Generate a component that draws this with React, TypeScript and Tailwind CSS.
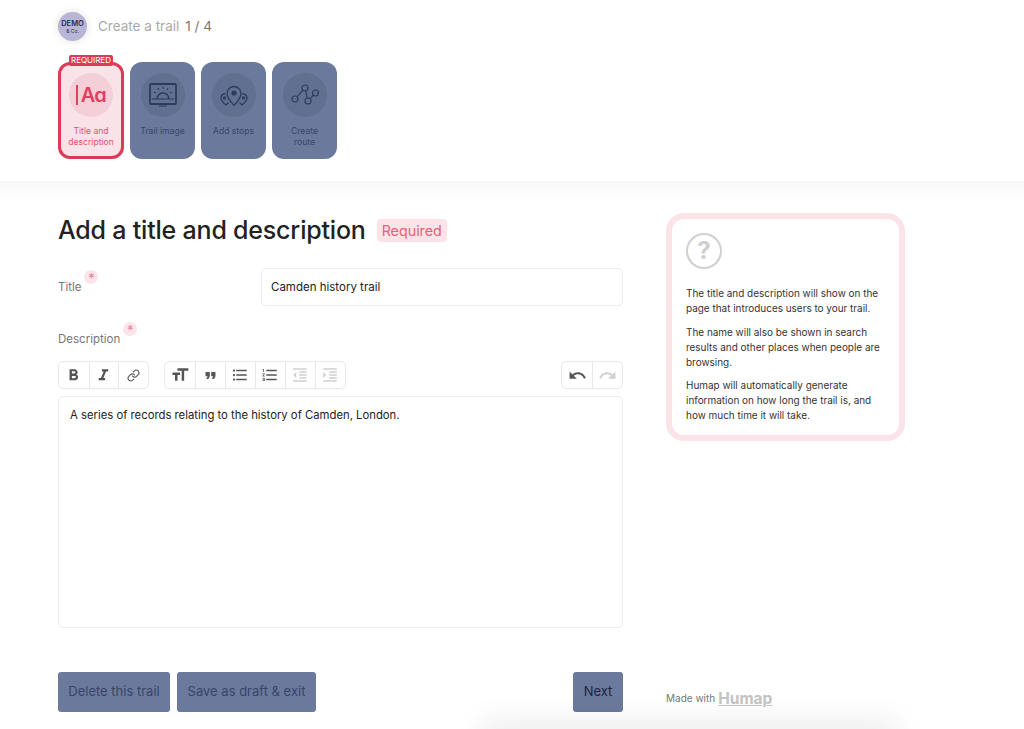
import { Link } from 'lucide-react';
import {
  MdFormatBold,
  MdFormatItalic,
  MdFormatQuote,
  MdFormatListBulleted,
  MdFormatListNumbered,
  MdFormatIndentDecrease,
  MdFormatIndentIncrease,
  MdFormatSize,
  MdUndo,
  MdRedo,
} from 'react-icons/md';
import type { ReactNode } from 'react';

const font = { fontFamily: 'Inter, "Noto Sans", sans-serif' };

function ImageIcon() {
  return (
    <svg width="28" height="24" viewBox="0 0 28 24" fill="none" stroke="#2f3b5c" strokeWidth="1.3">
      <rect x="1" y="1" width="26" height="20" rx="1" strokeWidth="1.8" />
      <path d="M8 16a6 6 0 0 1 12 0" strokeWidth="1.6" />
      <path d="M3 16h22M10 23h8M14 4v2M9 5l1 2M19 5l-1 2M5 9l2 1M23 9l-2 1" strokeWidth="1.1" />
    </svg>
  );
}

function StopsIcon() {
  return (
    <svg width="28" height="22" viewBox="0 0 28 22" fill="none" stroke="#2f3b5c" strokeWidth="1.3">
      <path d="M14 21.500c-3.500-4-7-7.500-7-12a7 7 0 0 1 14 0c0 4.500-3.500 8-7 12z" />
      <circle cx="14" cy="9" r="2.600" fill="#2f3b5c" stroke="none" />
      <path d="M5.500 9.500C3 10 1 11.500 1 14c0 2.500 2.500 5 5 7l2.500-2.500" />
      <path d="M22.500 9.500c2.500.5 4.500 2 4.500 4.500 0 2.500-2.500 5-5 7l-2.500-2.500" />
      <circle cx="4.500" cy="14" r="1" />
      <circle cx="23.500" cy="14" r="1" />
    </svg>
  );
}

function RouteIcon() {
  return (
    <svg width="28" height="22" viewBox="0 0 28 22" fill="none" stroke="#2f3b5c" strokeWidth="1.2">
      <circle cx="14" cy="4" r="3" />
      <circle cx="24.500" cy="9" r="3" />
      <circle cx="4" cy="15" r="3" />
      <circle cx="17" cy="17" r="3" />
      <path d="M12 6.200 6 12.800M14.700 7l1.600 7M19 14.800l3.500-3.600" />
    </svg>
  );
}

function Step({ label, icon, active }: { label: string; icon: ReactNode; active?: boolean }) {
  return (
    <div
      className={
        active
          ? 'relative w-[66px] h-[97px] rounded-[12px] border-[3px] border-[#dc3a57] bg-[#f9e3e8] flex flex-col items-center pt-[8px]'
          : 'w-[65px] h-[97px] rounded-[12px] bg-[#6b7a9c] flex flex-col items-center pt-[11px]'
      }
    >
      {active && (
        <span className="absolute -top-[10px] left-[8px] h-[11px] w-[44px] rounded-[2px] bg-[#dc3a57] text-white text-[8px] leading-[11px] text-center">
          REQUIRED
        </span>
      )}
      <div className={'w-[44px] h-[44px] rounded-full flex items-center justify-center ' + (active ? 'bg-[#f4cfd7]' : 'bg-[#616f91]')}>
        {icon}
      </div>
      <div className={'mt-[9px] px-2 text-center text-[8.6px] leading-[11px] ' + (active ? 'text-[#e4506c] px-0' : 'text-[#38456a]')}>
        {label}
      </div>
    </div>
  );
}

function ToolButton({ children, first, narrow }: { children: ReactNode; first?: boolean; narrow?: boolean }) {
  return (
    <div className={(narrow ? 'w-[29.600px]' : 'w-[30px]') + ' h-full flex items-center justify-center ' + (first ? '' : 'border-l border-[#e8e8e8]')}>
      {children}
    </div>
  );
}

function Star() {
  return (
    <span className="absolute -top-[10px] -right-[17px] w-[14px] h-[14px] rounded-full bg-[#fbe4ea] text-[#e8829a] text-[13px] leading-[17px] text-center">
      *
    </span>
  );
}

export default function App() {
  return (
    <div style={font} className="w-[1024px] h-[729px] overflow-hidden bg-white relative text-[#222]">
      <header className="h-[181px] pl-[58px] pt-[12px] bg-white">
        <div className="flex items-center h-[29px]">
          <div className="w-[29px] h-[29px] rounded-full bg-[#b9b5d6] shadow-[0_0_10px_rgba(0,0,0,0.12)] flex flex-col items-center justify-center text-[#2c2a5c]">
            <span className="text-[7.500px] leading-[8px] font-semibold">DEMO</span>
            <span className="text-[5px] leading-[6px]">& Co.</span>
          </div>
          <span className="ml-[11px] text-[13.500px] text-[#aaaaaa]">Create a trail</span>
          <span className="ml-[6px] text-[13.500px] text-[#777]">1 / 4</span>
        </div>
        <div className="flex gap-[6px] mt-[21px]">
          <Step
            active
            label="Title and description"
            icon={
              <span className="flex items-center text-[#e0405e] text-[20px] font-semibold tracking-[-1px]">
                <span className="w-[1.500px] h-[20px] bg-[#e0405e] mr-[3px]" />
                Aɑ
              </span>
            }
          />
          <Step label="Trail image" icon={<ImageIcon />} />
          <Step label="Add stops" icon={<StopsIcon />} />
          <Step label="Create route" icon={<RouteIcon />} />
        </div>
      </header>

      <main className="bg-gradient-to-b from-[#f8f8f8] to-white to-[22px] h-[548px] pl-[58px] flex">
        <div className="w-[565px] flex flex-col pt-[32px]">
          <div className="flex items-center h-[34px]">
            <h1 className="pt-[2px] text-[25px] font-medium text-[#222] tracking-[-0.2px]">Add a title and description</h1>
            <span className="ml-[11px] h-[23px] px-[5px] rounded-[4px] bg-[#fbe3e8] text-[#e8607a] text-[14.300px] leading-[23px]">Required</span>
          </div>

          <div className="flex items-center mt-[21px] h-[38px]">
            <div className="w-[203px] pt-[2px] text-[11.500px] text-[#777]">
              <span className="relative">Title<Star /></span>
            </div>
            <div className="flex-1 h-full rounded-[5px] border border-[#ececec] bg-white px-[9px] pt-[2px] flex items-center text-[11.500px] text-[#222]">
              Camden history trail
            </div>
          </div>

          <div className="mt-[26px] text-[11.500px] leading-[14px] text-[#777]">
            <span className="relative">Description<Star /></span>
          </div>

          <div className="flex mt-[15px] h-[28px] text-[#555]">
            <div className="flex h-full border border-[#e8e8e8] rounded-[5px]">
              <ToolButton first narrow><MdFormatBold size={19} /></ToolButton>
              <ToolButton narrow><MdFormatItalic size={19} /></ToolButton>
              <ToolButton narrow><Link size={13} /></ToolButton>
            </div>
            <div className="flex h-full border border-[#e8e8e8] rounded-[5px] ml-[15px]">
              <ToolButton first><MdFormatSize size={20} /></ToolButton>
              <ToolButton><MdFormatQuote size={17} /></ToolButton>
              <ToolButton><MdFormatListBulleted size={18} /></ToolButton>
              <ToolButton><MdFormatListNumbered size={18} /></ToolButton>
              <ToolButton><MdFormatIndentDecrease size={18} className="text-[#d0d0d0]" /></ToolButton>
              <ToolButton><MdFormatIndentIncrease size={18} className="text-[#d0d0d0]" /></ToolButton>
            </div>
            <div className="flex h-full border border-[#e8e8e8] rounded-[5px] ml-auto">
              <ToolButton first><MdUndo size={19} /></ToolButton>
              <ToolButton><MdRedo size={19} className="text-[#d0d0d0]" /></ToolButton>
            </div>
          </div>

          <div className="mt-[7px] h-[232px] rounded-[5px] border border-[#ececec] bg-white px-[11px] py-[10px] text-[11.300px] leading-[16px] text-[#222]">
            A series of records relating to the history of Camden, London.
          </div>

          <div className="flex mt-[44px] gap-[7px] text-[13px] text-[#38456a]">
            <button className="w-[112px] h-[40px] rounded-[3px] bg-[#6b7a9c]">Delete this trail</button>
            <button className="w-[139px] h-[40px] rounded-[3px] bg-[#6b7a9c]">Save as draft & exit</button>
            <button className="w-[50px] h-[40px] ml-auto rounded-[3px] bg-[#6b7a9c] text-[#1b2440]">Next</button>
          </div>
        </div>

        <aside className="ml-[43px] w-[239px] flex flex-col pt-[32px]">
          <div className="h-[228px] rounded-[18px] border-[6px] border-[#fbe3e8] bg-white pl-[14px] pr-[10px] pt-[14px] text-[9.950px] leading-[15px] text-[#333]">
            <div className="w-[36px] h-[36px] rounded-full border-[2.500px] border-[#d0d0d0] text-[#cfcfcf] text-[24px] font-bold leading-[31px] text-center">?</div>
            <p className="mt-[17px]">The title and description will show on the page that introduces users to your trail.</p>
            <p className="mt-[9px]">The name will also be shown in search results and other places when people are browsing.</p>
            <p className="mt-[8px]">Humap will automatically generate information on how long the trail is, and how much time it will take.</p>
          </div>
          <div className="mt-[246px] flex items-center text-[10px] text-[#777]">
            Made with
            <span className="ml-[3px] text-[15.500px] font-bold text-[#c4c4c4] underline">Humap</span>
          </div>
        </aside>
      </main>

      <div className="absolute bottom-[-14px] left-[490px] w-[400px] h-[14px] shadow-[0_0_30px_8px_rgba(0,0,0,0.08)]" />
    </div>
  );
}
